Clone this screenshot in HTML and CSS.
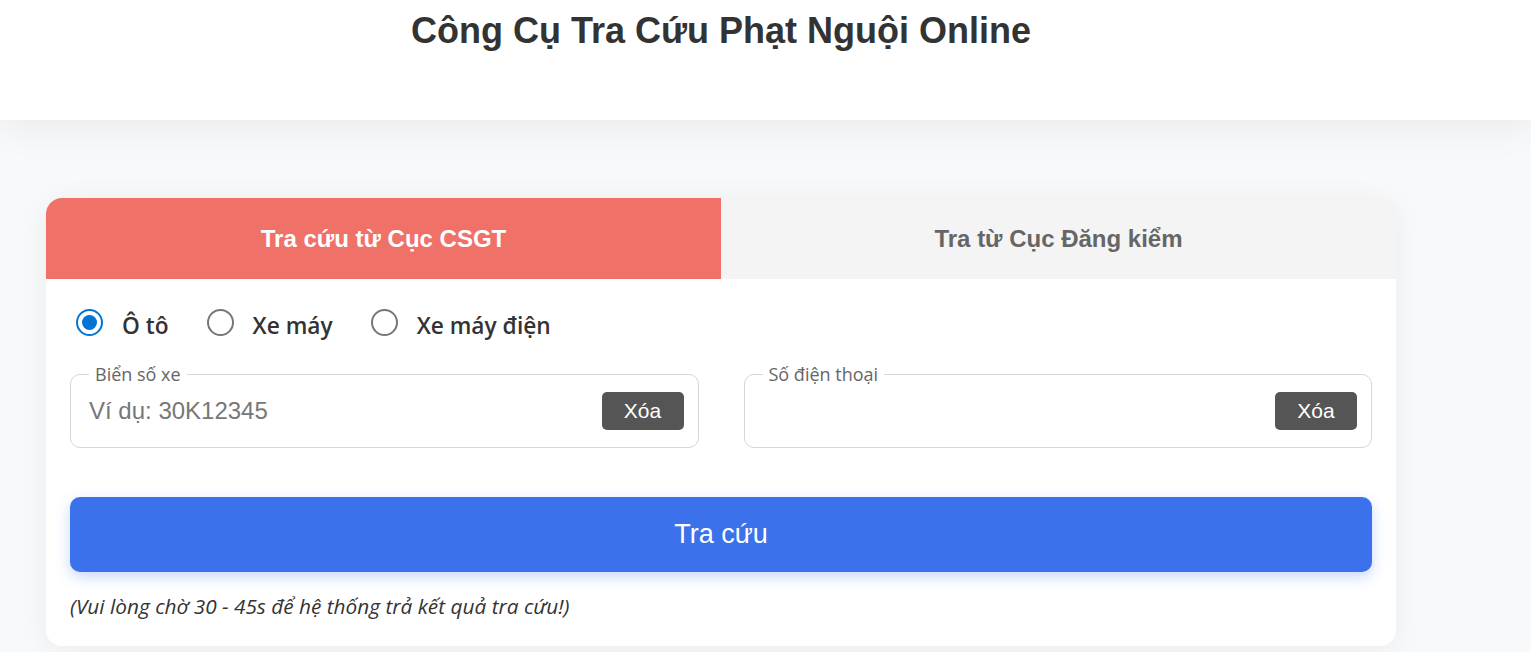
FILE: index.html
```html
<!DOCTYPE html>
<html lang="vi">
<head>
<meta charset="utf-8">
<title>Công Cụ Tra Cứu Phạt Nguội Online</title>
<link rel="stylesheet" href="styles.css">
</head>
<body>
<header class="site-header">
  <div class="wrap">
    <h1 class="title">Công Cụ Tra Cứu Phạt Nguội Online</h1>
  </div>
</header>
<main class="page">
  <div class="wrap">
    <section class="card">
      <div class="tabs">
        <div class="tab tab-active">Tra cứu từ Cục CSGT</div>
        <div class="tab">Tra từ Cục Đăng kiểm</div>
      </div>
      <div class="card-body">
        <div class="radios">
          <label class="radio"><span class="dot checked"></span><span class="radio-text">Ô tô</span></label>
          <label class="radio"><span class="dot"></span><span class="radio-text">Xe máy</span></label>
          <label class="radio"><span class="dot"></span><span class="radio-text">Xe máy điện</span></label>
        </div>
        <div class="fields">
          <fieldset class="field">
            <legend class="legend">Biển số xe</legend>
            <div class="field-row">
              <span class="placeholder">Ví dụ: 30K12345</span>
              <button class="clear">Xóa</button>
            </div>
          </fieldset>
          <fieldset class="field">
            <legend class="legend">Số điện thoại</legend>
            <div class="field-row">
              <span class="placeholder"></span>
              <button class="clear">Xóa</button>
            </div>
          </fieldset>
        </div>
        <button class="submit">Tra cứu</button>
        <p class="note">(Vui lòng chờ 30 - 45s để hệ thống trả kết quả tra cứu!)</p>
      </div>
    </section>
  </div>
</main>
</body>
</html>
```

FILE: styles.css
```css
* { box-sizing: border-box; }
html, body { margin: 0; padding: 0; }
body {
  background: #f8f9fb;
  font-family: "Liberation Sans", Arial, sans-serif;
  color: #333;
  height: 652px;
  overflow: hidden;
}
.wrap {
  width: 1350px;
  margin-left: 46px;
}
.site-header {
  background: #fff;
  height: 120px;
  box-shadow: 0 6px 40px rgba(0, 0, 0, 0.07);
  position: relative;
  z-index: 1;
}
.title {
  margin: 0;
  padding-top: 11px;
  text-align: center;
  font-size: 36px;
  line-height: 40px;
  font-weight: bold;
  color: #333;
}
.page {
  padding-top: 78px;
}
.card {
  background: #fff;
  border-radius: 16px;
  overflow: hidden;
  box-shadow: 0 4px 30px rgba(0, 0, 0, 0.06);
}
.tabs {
  display: flex;
  height: 81px;
}
.tab {
  flex: 1;
  display: flex;
  align-items: center;
  justify-content: center;
  background: #f4f4f4;
  color: #666;
  font-size: 24px;
  font-weight: bold;
}
.tab-active {
  background: #f07167;
  color: #fff;
}
.card-body {
  padding: 26px 24px 28px 24px;
}
.radios {
  display: flex;
  align-items: center;
  height: 35px;
  gap: 38px;
  padding-left: 6px;
}
.radio {
  display: flex;
  align-items: center;
  gap: 19px;
}
.dot {
  width: 27px;
  height: 27px;
  border-radius: 50%;
  border: 2px solid #767676;
  background: #fff;
  display: flex;
  align-items: center;
  justify-content: center;
}
.dot.checked {
  border-color: #0075d5;
}
.dot.checked::after {
  content: "";
  width: 15px;
  height: 15px;
  border-radius: 50%;
  background: #0075d5;
}
.radio-text {
  font-family: "Open Sans", "Noto Sans", sans-serif;
  font-weight: 600;
  font-size: 22.7px;
  color: #333;
  position: relative;
  top: 3px;
}
.fields {
  display: flex;
  gap: 45px;
  margin-top: 23px;
}
.field {
  flex: 1;
  margin: 0;
  min-width: 0;
  border: 1px solid #d6d6d6;
  border-radius: 10px;
  padding: 7px 14px 17px 18px;
}
.legend {
  padding: 0 6px;
  font-family: "Open Sans", "Noto Sans", sans-serif;
  font-size: 18px;
  line-height: 22px;
  color: #666;
}
.field-row {
  display: flex;
  align-items: center;
  justify-content: space-between;
  height: 38px;
}
.placeholder {
  font-size: 24px;
  color: #777;
}
.clear {
  width: 82px;
  height: 38px;
  border: 0;
  border-radius: 5px;
  background: #555;
  color: #fff;
  font-family: "Liberation Sans", Arial, sans-serif;
  font-size: 21px;
  padding: 0;
}
.submit {
  display: block;
  width: 100%;
  height: 75px;
  margin-top: 49px;
  border: 0;
  border-radius: 10px;
  background: #3b71eb;
  color: #fff;
  font-family: "Liberation Sans", Arial, sans-serif;
  font-size: 27px;
  box-shadow: 0 5px 14px rgba(59, 113, 235, 0.28);
}
.note {
  margin: 22px 0 0 0;
  font-family: "Open Sans", "Noto Sans", sans-serif;
  font-style: italic;
  font-size: 20.8px;
  line-height: 24px;
  color: #333;
}
```
